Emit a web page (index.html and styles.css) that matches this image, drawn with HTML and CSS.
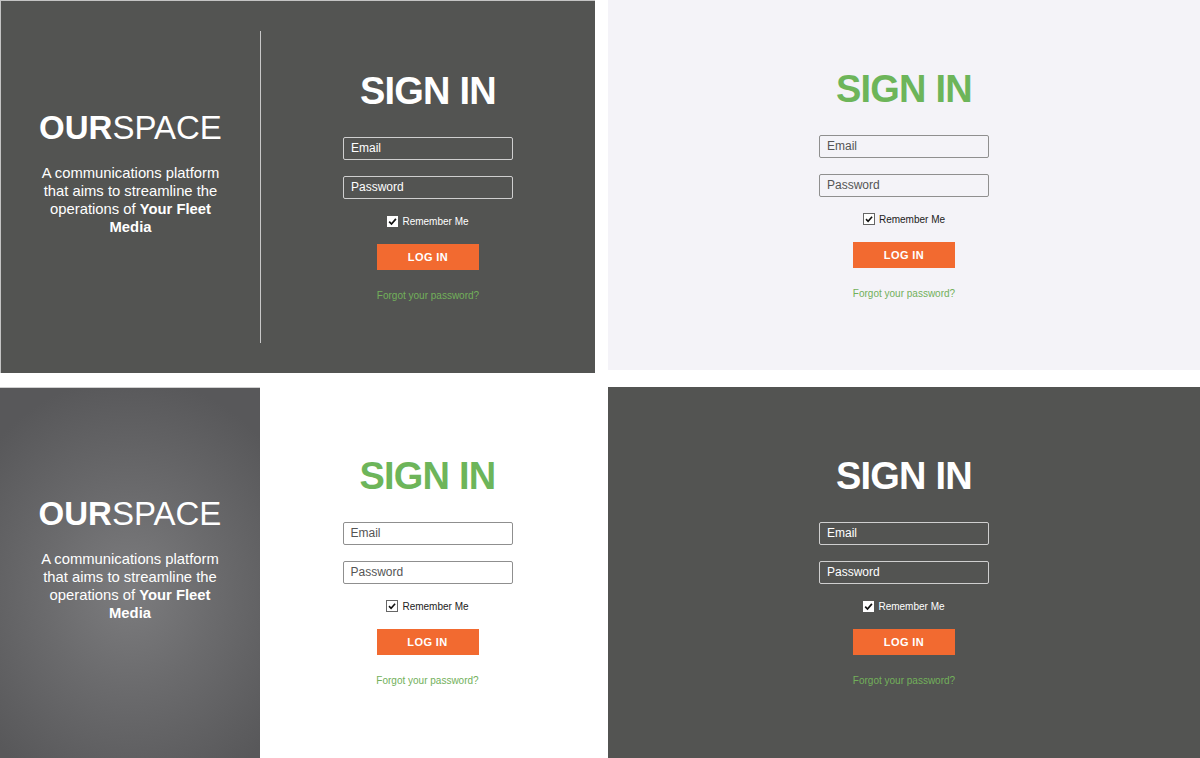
FILE: index.html
```html
<!DOCTYPE html>
<html>
<head>
<meta charset="utf-8">
<link rel="stylesheet" href="styles.css">
</head>
<body>
<div class="page">

  <section class="panel panel-dark panel-split bordered">
    <div class="brand-col">
      <div class="brand">
        <div class="logo"><b>OUR</b>SPACE</div>
        <p class="tagline">A communications platform that aims to streamline the operations of <b>Your Fleet Media</b></p>
      </div>
    </div>
    <div class="divider"></div>
    <div class="form-col">
      <form class="signin on-dark">
        <h1 class="title">SIGN IN</h1>
        <div class="field">Email</div>
        <div class="field">Password</div>
        <label class="remember"><span class="box"><svg viewBox="0 0 11 11"><path d="M2.2 5.6 L4.5 8 L8.9 2.9" /></svg></span>Remember Me</label>
        <div class="btn">LOG IN</div>
        <a class="forgot">Forgot your password?</a>
      </form>
    </div>
  </section>

  <section class="panel panel-light short">
    <form class="signin on-light green">
      <h1 class="title">SIGN IN</h1>
      <div class="field">Email</div>
      <div class="field">Password</div>
      <label class="remember"><span class="box"><svg viewBox="0 0 11 11"><path d="M2.2 5.6 L4.5 8 L8.9 2.9" /></svg></span>Remember Me</label>
      <div class="btn">LOG IN</div>
      <a class="forgot">Forgot your password?</a>
    </form>
  </section>

  <section class="panel panel-white panel-split">
    <div class="brand-col gradient">
      <div class="brand">
        <div class="logo"><b>OUR</b>SPACE</div>
        <p class="tagline">A communications platform that aims to streamline the operations of <b>Your Fleet Media</b></p>
      </div>
    </div>
    <div class="form-col">
      <form class="signin on-light green">
        <h1 class="title">SIGN IN</h1>
        <div class="field">Email</div>
        <div class="field">Password</div>
        <label class="remember"><span class="box"><svg viewBox="0 0 11 11"><path d="M2.2 5.6 L4.5 8 L8.9 2.9" /></svg></span>Remember Me</label>
        <div class="btn">LOG IN</div>
        <a class="forgot">Forgot your password?</a>
      </form>
    </div>
  </section>

  <section class="panel panel-dark">
    <form class="signin on-dark">
      <h1 class="title">SIGN IN</h1>
      <div class="field">Email</div>
      <div class="field">Password</div>
      <label class="remember"><span class="box"><svg viewBox="0 0 11 11"><path d="M2.2 5.6 L4.5 8 L8.9 2.9" /></svg></span>Remember Me</label>
      <div class="btn">LOG IN</div>
      <a class="forgot">Forgot your password?</a>
    </form>
  </section>

</div>
</body>
</html>
```

FILE: styles.css
```css
* { box-sizing: border-box; }

html, body {
  margin: 0;
  padding: 0;
  background: #ffffff;
  font-family: "Liberation Sans", Arial, sans-serif;
}

.page {
  width: 1200px;
  height: 758px;
  display: grid;
  grid-template-columns: 595px 592px;
  grid-template-rows: 373px 371px;
  column-gap: 13px;
  row-gap: 14px;
  overflow: hidden;
}

.panel {
  position: relative;
  display: flex;
  justify-content: center;
}

.panel-dark { background: #535452; }
.panel-light { background: #f4f3f8; }
.panel-white { background: #ffffff; }

.bordered {
  border-top: 1px solid #c4c4c4;
  border-left: 1px solid #c4c4c4;
}

.short { height: 370px; }

.panel-split { justify-content: flex-start; }

.brand-col {
  width: 260px;
  flex: none;
  display: flex;
  justify-content: center;
  padding-top: 109px;
}

.bordered .brand-col { width: 259px; padding-top: 110px; }

.gradient {
  background: radial-gradient(ellipse 72% 58% at 50% 55%, #7c7c7e 0%, #6b6b6d 45%, #58585a 100%);
  border-top: 1px solid #d0d0d0;
}

.brand {
  color: #ffffff;
  text-align: center;
  width: 200px;
}

.logo {
  font-size: 33px;
  line-height: 33px;
  font-weight: 400;
  white-space: nowrap;
}
.logo b { font-weight: 700; }

.tagline {
  margin: 20px auto 0;
  width: 190px;
  font-size: 14.8px;
  line-height: 18px;
}
.tagline b { font-weight: 700; }

.divider {
  width: 1px;
  flex: none;
  height: 312px;
  margin-top: 30px;
  background: #c8c8c8;
}

.form-col {
  flex: 1;
  display: flex;
  justify-content: center;
}

.signin {
  display: flex;
  flex-direction: column;
  align-items: center;
  width: 170px;
  padding-top: 70px;
  margin: 0;
}

.bordered .signin { padding-top: 71px; }

.title {
  margin: 0 0 26px;
  font-size: 38px;
  line-height: 39px;
  letter-spacing: -0.8px;
  font-weight: 700;
  white-space: nowrap;
  color: #ffffff;
}
.green .title { color: #6db55a; }

.field {
  width: 170px;
  height: 23px;
  border: 1px solid #cfcfcf;
  border-radius: 2px;
  padding: 0 7px;
  font-size: 12px;
  line-height: 21px;
  color: #ffffff;
  margin-bottom: 16px;
}
.on-light .field {
  border-color: #8f8f8f;
  color: #555555;
}

.remember {
  display: flex;
  align-items: center;
  gap: 4px;
  height: 12px;
  font-size: 10px;
  color: #ffffff;
  margin: 0 0 17px;
}
.on-light .remember { color: #222222; }

.box {
  width: 11px;
  height: 11px;
  background: #ffffff;
  display: inline-block;
}
.on-light .box {
  border: 1px solid #666666;
  width: 12px;
  height: 12px;
}
.box svg {
  width: 100%;
  height: 100%;
  display: block;
}
.box path {
  fill: none;
  stroke: #111111;
  stroke-width: 1.7;
}

.btn {
  width: 102px;
  height: 26px;
  background: #f26a30;
  color: #ffffff;
  font-size: 11px;
  font-weight: 700;
  letter-spacing: 0.4px;
  line-height: 26px;
  text-align: center;
  margin-bottom: 20px;
}

.forgot {
  font-size: 10px;
  line-height: 12px;
  color: #72b05a;
  white-space: nowrap;
}
```
